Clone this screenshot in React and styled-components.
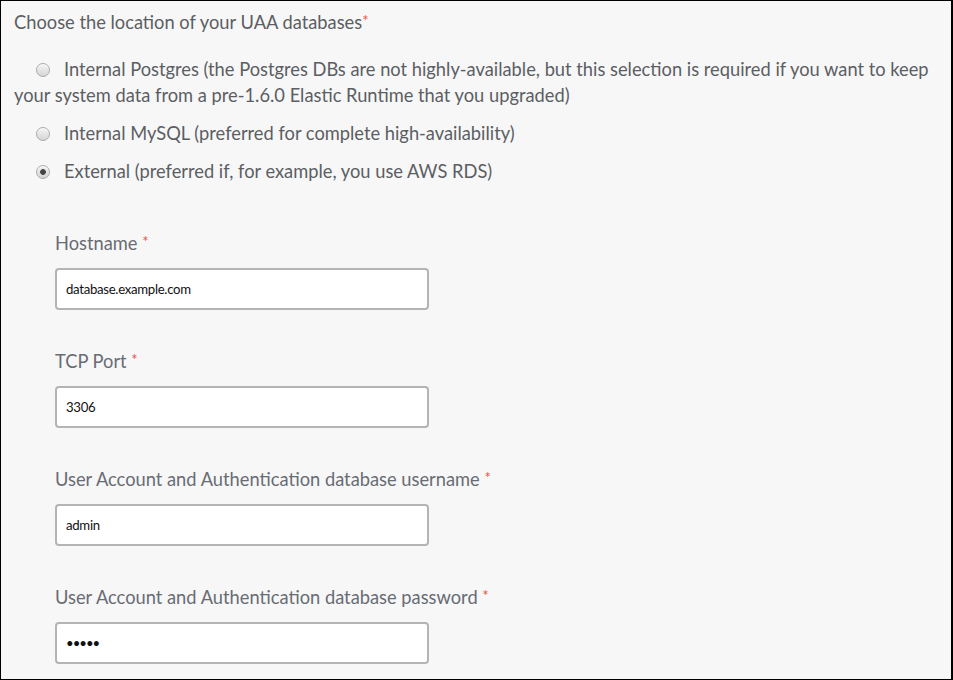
import React from "react";
import styled, { createGlobalStyle } from "styled-components";

const GlobalStyle = createGlobalStyle`
  html, body {
    margin: 0;
    padding: 0;
    background: #ffffff;
  }
  body {
    font-family: Lato, "Open Sans", sans-serif;
  }
`;

const options = [
  {
    label:
      "Internal Postgres (the Postgres DBs are not highly-available, but this selection is required if you want to keep your system data from a pre-1.6.0 Elastic Runtime that you upgraded)",
    checked: false,
  },
  { label: "Internal MySQL (preferred for complete high-availability)", checked: false },
  { label: "External (preferred if, for example, you use AWS RDS)", checked: true },
];

const fields = [
  { label: "Hostname", value: "database.example.com" },
  { label: "TCP Port", value: "3306" },
  { label: "User Account and Authentication database username", value: "admin" },
  { label: "User Account and Authentication database password", value: "\u2022\u2022\u2022\u2022\u2022", secret: true },
];

function App() {
  return (
    <>
      <GlobalStyle />
      <Frame>
        <Title>
          Choose the location of your UAA databases<Star>*</Star>
        </Title>
        <Options>
          {options.map((o) => (
            <Option key={o.label}>
              <Radio checked={o.checked} />
              {o.label}
            </Option>
          ))}
        </Options>
        <Fields>
          {fields.map((f) => (
            <Field key={f.label}>
              <FieldLabel>
                {f.label} <Star>*</Star>
              </FieldLabel>
              <Input secret={f.secret}>{f.value}</Input>
            </Field>
          ))}
        </Fields>
      </Frame>
    </>
  );
}

const Frame = styled.div`
  box-sizing: border-box;
  width: 953px;
  height: 680px;
  overflow: hidden;
  background: #f7f7f7;
  border: 1px solid #000;
  border-right-width: 2px;
  padding: 8px 0 0 13px;
  color: #5b5e63;
`;

const Title = styled.div`
  font-size: 18.3px;
  line-height: 26px;
`;

const Star = styled.span`
  position: relative;
  top: -3px;
  color: #e8503f;
  font-size: 15px;
  line-height: 1;
`;

const Options = styled.div`
  margin-top: 21px;
  display: flex;
  flex-direction: column;
  gap: 12px;
`;

const Option = styled.div`
  font-size: 18.3px;
  line-height: 26px;
  padding-right: 8px;
`;

const Radio = styled.span`
  display: inline-block;
  box-sizing: border-box;
  width: 14px;
  height: 14px;
  margin: 0 14px 0 22px;
  vertical-align: -1px;
  border-radius: 50%;
  border: 1px solid #aaaaaa;
  background: ${(p) =>
    p.checked
      ? "radial-gradient(circle, #444 0 2.5px, transparent 3.2px), linear-gradient(#f2f2f2, #d4d4d4)"
      : "linear-gradient(#f4f4f4, #d6d6d6)"};
  box-shadow: inset 0 1px 1px rgba(255, 255, 255, 0.8);
`;

const Fields = styled.div`
  margin-top: 46px;
  padding-left: 41px;
  display: flex;
  flex-direction: column;
  gap: 38px;
`;

const Field = styled.div`
  display: flex;
  flex-direction: column;
  gap: 12px;
`;

const FieldLabel = styled.div`
  font-size: 18.3px;
  line-height: 26px;
  color: #686c74;
`;

const Input = styled.div`
  box-sizing: border-box;
  width: 374px;
  height: 42px;
  padding: 0 9px;
  display: flex;
  align-items: center;
  background: #fff;
  border: 2px solid #b4b4b4;
  border-radius: 4px;
  color: #111;
  font-size: 13.2px;
  letter-spacing: ${(p) => (p.secret ? "-1px" : "-0.3px")};
`;

export default App;
